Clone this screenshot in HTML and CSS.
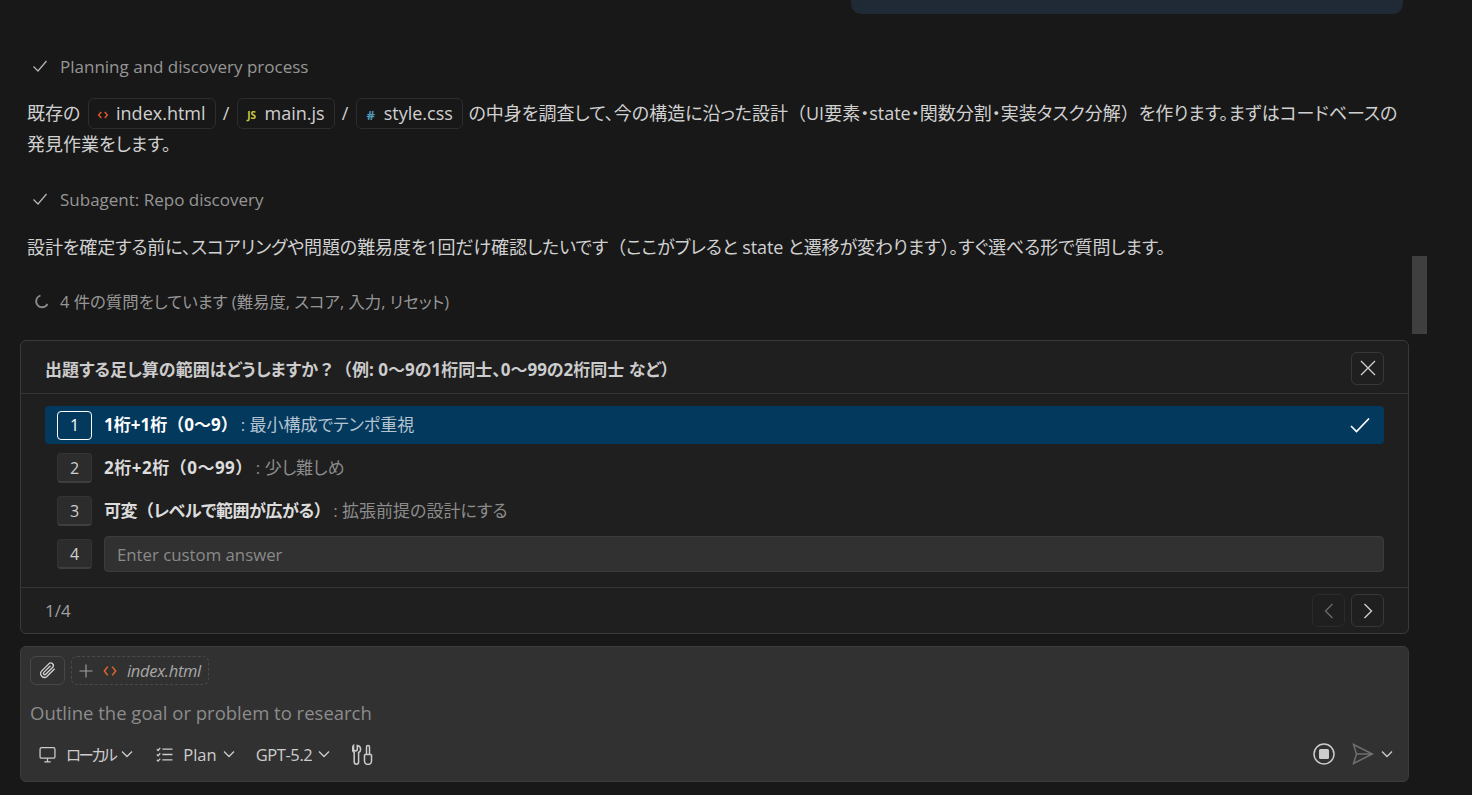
FILE: index.html
```html
<!DOCTYPE html>
<html lang="ja">
<head>
<meta charset="utf-8">
<title>Chat</title>
<link rel="stylesheet" href="styles.css">
</head>
<body>
<div class="scrollbar"></div>
<main class="chat">
  <div class="user-bubble"></div>

  <div class="progress progress-first">
    <svg class="pi" viewBox="0 0 16 16"><path d="M1.500 8.500l4.500 4.500 8.500-10"/></svg>
    <span>Planning and discovery process</span>
  </div>
  <p class="msg msg-first">既存の <span class="chip chip-first"><svg class="ci" viewBox="0 0 16 16"><path class="or" d="M6 4.500L3 8l3 3.500M10 4.500L13 8l-3 3.500"/></svg>index.html</span> <span class="sl">/</span> <span class="chip"><span class="js">JS</span>main.js</span> <span class="sl">/</span> <span class="chip"><span class="hash">#</span>style.css</span> の中身を調査して、今の構造に沿った設計<span class="fw">（</span>UI要素・state・関数分割・実装タスク分解<span class="fw">）</span>を作ります。まずはコードベースの発見作業をします。</p>

  <div class="progress progress-second">
    <svg class="pi" viewBox="0 0 16 16"><path d="M1.500 8.500l4.500 4.500 8.500-10"/></svg>
    <span>Subagent: Repo discovery</span>
  </div>
  <p class="msg msg-second">設計を確定する前に、スコアリングや問題の難易度を1回だけ確認したいです<span class="fw">（</span>ここがブレると state と遷移が変わります<span class="fw">）</span>。すぐ選べる形で質問します。</p>

  <div class="progress progress-third">
    <svg class="pi spin" viewBox="0 0 16 16"><path d="M6.500 2.500A6 6 0 1 0 13.500 11"/></svg>
    <span>4 件の質問をしています (難易度, スコア, 入力, リセット)</span>
  </div>

  <section class="question">
    <header class="q-head">
      <h2>出題する足し算の範囲はどうしますか<span class="fw">？（</span>例: 0〜9の1桁同士、0〜99の2桁同士 など<span class="fw">）</span></h2>
      <button class="icon-btn"><svg viewBox="0 0 16 16"><path d="M1 1l14 14M15 1L1 15"/></svg></button>
    </header>
    <div class="q-body">
      <div class="opt opt-sel">
        <span class="key key-sel">1</span>
        <span class="opt-t"><b>1桁+1桁<span class="fw">（</span>0〜9<span class="fw">）</span></b><i>: 最小構成でテンポ重視</i></span>
        <svg class="opt-check" viewBox="0 0 20 16"><path d="M1 9l5.500 5.500L19 1.500"/></svg>
      </div>
      <div class="opt opt-two">
        <span class="key">2</span>
        <span class="opt-t"><b>2桁+2桁<span class="fw">（</span>0〜99<span class="fw">）</span></b><i>: 少し難しめ</i></span>
      </div>
      <div class="opt opt-three">
        <span class="key">3</span>
        <span class="opt-t"><b>可変<span class="fw">（</span>レベルで範囲が広がる<span class="fw">）</span></b><i>: 拡張前提の設計にする</i></span>
      </div>
      <div class="opt opt-input">
        <span class="key">4</span>
        <div class="custom">Enter custom answer</div>
      </div>
    </div>
    <footer class="q-foot">
      <span class="pager">1/4</span>
      <div class="nav">
        <button class="icon-btn nav-off"><svg viewBox="0 0 16 16"><path d="M11.500 1L4.500 8l7 7"/></svg></button>
        <button class="icon-btn"><svg viewBox="0 0 16 16"><path d="M4.500 1l7 7-7 7"/></svg></button>
      </div>
    </footer>
  </section>

  <section class="composer">
    <div class="ctx">
      <button class="attach"><svg viewBox="0 0 16 16"><path d="M14 6.500L7.500 13a3.200 3.200 0 0 1-4.500-4.500L9.300 2.200a2.200 2.200 0 0 1 3.100 3.100L6.500 11.200a1.100 1.100 0 0 1-1.600-1.600L10.500 4"/></svg></button>
      <div class="ctx-file">
        <svg class="plus" viewBox="0 0 16 16"><path d="M8 .5v15M.5 8h15"/></svg>
        <svg class="code" viewBox="0 0 16 16"><path d="M5.500 3L1.500 8l4 5M10.500 3l4 5-4 5"/></svg>
        <em>index.html</em>
      </div>
    </div>
    <div class="prompt">Outline the goal or problem to research</div>
    <div class="tools">
      <span class="tool tool-local">
        <svg class="ti" viewBox="0 0 16 16"><rect x="1" y="1.500" width="14" height="10" rx="1.500"/><path d="M5 15h6M8 11.500V15"/></svg>
        <span class="local-label">ローカル</span><svg class="ch" viewBox="0 0 12 8"><path d="M1 1.500l5 5 5-5"/></svg>
      </span>
      <span class="tool tool-plan">
        <svg class="ti" viewBox="0 0 16 16"><path d="M6 3h9.500M6 8h9.500M6 13h9.500M.800 3l1.200 1.200L4 1.800M.800 8l1.200 1.200L4 6.800M.800 13l1.200 1.200L4 11.800"/></svg>
        Plan<svg class="ch" viewBox="0 0 12 8"><path d="M1 1.500l5 5 5-5"/></svg>
      </span>
      <span class="tool tool-model">
        GPT-5.2<svg class="ch" viewBox="0 0 12 8"><path d="M1 1.500l5 5 5-5"/></svg>
      </span>
      <svg class="wrench" viewBox="0 0 21 21"><path d="M1.500 1.500v3.500a1.900 1.900 0 0 0 3.800 0V1.500C7.500 2 8.600 3.500 8.600 5.200c0 1.600-.9 2.800-2 3.300v9.500a2.200 2.200 0 0 1-4.400 0V8.500C1 8 .5 6.700.5 5.200.5 3.800.6 2.400 1.500 1.500zM12.500 10.500h7M14.500 10.500V3a1.500 1.500 0 0 1 3 0v7.500M12.500 10.500V17a3.500 3.500 0 0 0 7 0v-6.500"/></svg>
      <span class="spacer"></span>
      <svg class="stop" viewBox="0 0 22 22"><circle cx="11" cy="11" r="10"/><rect x="6" y="6" width="10" height="10" rx="1.500"/></svg>
      <svg class="send" viewBox="0 0 22 22"><path d="M1.500 1.500L20.500 11 1.500 20.500 4.500 11zM4.500 11h16"/></svg>
      <svg class="ch send-ch" viewBox="0 0 12 8"><path d="M1 1.500l5 5 5-5"/></svg>
    </div>
  </section>
</main>
</body>
</html>
```
FILE: styles.css
```css
* { box-sizing: border-box; }
html, body { margin: 0; height: 100%; overflow: hidden; }
body {
  background: #181818;
  color: #cccccc;
  font-family: "Open Sans", "Noto Sans CJK JP", sans-serif;
  font-feature-settings: "palt";
  font-size: 17px;
  position: relative;
}
svg { display: block; fill: none; stroke: currentColor; flex: none; }
.fw { font-feature-settings: normal; }
.scrollbar {
  position: absolute;
  left: 1412px;
  top: 256px;
  width: 15px;
  height: 78px;
  background: #3f3f3f;
}
.chat {
  width: 1389px;
  margin-left: 20px;
  display: flex;
  flex-direction: column;
}
.user-bubble {
  align-self: flex-end;
  width: 552px;
  height: 14px;
  margin-right: 6px;
  background: #1f2a36;
  border-radius: 0 0 10px 10px;
}
.progress {
  display: flex;
  align-items: center;
  gap: 12px;
  height: 24px;
  padding-left: 12px;
  color: #969696;
  font-size: 17px;
}
.pi { width: 16px; height: 16px; stroke: #b4b4b4; stroke-width: 1.300; }
.spin { stroke: #8a8a8a; stroke-width: 1.800; margin-left: 2px; margin-right: -2px; }
.progress-first { margin-top: 40px; }
.progress-second { margin-top: 27px; }
.progress-third { margin-top: 26px; font-size: 16.400px; }
.msg {
  margin: 0;
  padding-left: 7px;
  line-height: 31px;
  color: #d0d0d0;
  font-size: 18px;
}
.msg-first { margin-top: 20px; }
.msg-second { margin-top: 21px; letter-spacing: -0.100px; }
.chip {
  display: inline-block;
  height: 31px;
  padding: 0 9px 0 7px;
  border: 1px solid #2d2d2d;
  border-radius: 6px;
  line-height: 29px;
  margin: 0 1px;
  vertical-align: top;
}
.chip-first { margin-left: 3px; }
.ci, .js, .hash { display: inline-block; vertical-align: middle; margin-right: 6px; }
.ci { width: 14px; height: 14px; stroke-width: 1.600; }
.or { stroke: #e2572b; }
.js { width: 14px; color: #cbcb41; font-size: 10px; font-weight: 700; text-align: center; }
.hash { width: 14px; color: #519aba; font-size: 13px; font-weight: 700; text-align: center; }
.sl { margin: 0 1.500px; }
.question {
  margin-top: 27px;
  height: 294px;
  background: #1f1f1f;
  border: 1px solid #3a3a3a;
  border-radius: 6px;
  display: flex;
  flex-direction: column;
}
.q-head {
  height: 53px;
  flex: none;
  display: flex;
  align-items: center;
  justify-content: space-between;
  padding: 2px 24px 0 24px;
  border-bottom: 1px solid #353535;
}
.q-head h2 { margin: 0; font-size: 17px; font-weight: 700; color: #cccccc; }
.icon-btn {
  width: 33px;
  height: 33px;
  padding: 0;
  background: transparent;
  border: 1px solid #383838;
  border-radius: 6px;
  color: #cccccc;
  display: flex;
  align-items: center;
  justify-content: center;
}
.icon-btn svg { width: 16px; height: 16px; stroke-width: 1.400; }
.q-body { flex: 1; padding: 12px 24px 0; display: flex; flex-direction: column; }
.opt {
  height: 38px;
  margin-bottom: 5px;
  padding: 0 12px;
  display: flex;
  align-items: center;
  gap: 12px;
  border-radius: 4px;
  font-size: 17px;
}
.opt-sel { background: #04395e; color: #fff; padding-right: 14px; }
.key {
  width: 35px;
  height: 30px;
  flex: none;
  display: flex;
  align-items: center;
  justify-content: center;
  background: #2c2c2c;
  border: 1px solid #333;
  border-bottom: 2px solid #3f3f3f;
  border-radius: 4px;
  color: #cfcfcf;
  font-size: 16px;
}
.key-sel { background: transparent; border: 1px solid #fff; color: #fff; height: 29px; }
.opt-t { flex: 1; padding-bottom: 3px; }
.opt-t b { color: #dcdcdc; font-weight: 700; }
.opt-t i { font-style: normal; color: #8c8c8c; margin-left: 3px; }
.opt-two b { letter-spacing: 0.500px; }
.opt-three b { letter-spacing: -0.500px; }
.opt-sel .opt-t b { color: #fff; }
.opt-sel .opt-t i { color: #b4c4d0; }
.opt-check { width: 20px; height: 16px; stroke: #fff; stroke-width: 1.700; }
.opt-input { margin: 0; padding-right: 0; }
.custom {
  flex: 1;
  height: 36px;
  padding-left: 12px;
  display: flex;
  align-items: center;
  background: #313131;
  border: 1px solid #3c3c3c;
  border-radius: 4px;
  color: #8a8a8a;
  font-size: 16.800px;
}
.q-foot {
  height: 46px;
  flex: none;
  display: flex;
  align-items: center;
  justify-content: space-between;
  padding: 0 24px;
  border-top: 1px solid #353535;
}
.pager { color: #a0a0a0; font-size: 17px; }
.nav { display: flex; gap: 6px; }
.nav-off { color: #6a6a6a; border-color: #2b2b2b; }
.composer {
  margin-top: 12px;
  height: 136px;
  background: #313131;
  border: 1px solid #3c3c3c;
  border-radius: 6px;
  padding: 9px 9px 0;
  display: flex;
  flex-direction: column;
}
.ctx { display: flex; gap: 6px; height: 29px; }
.attach {
  width: 35px;
  height: 29px;
  padding: 0;
  display: flex;
  align-items: center;
  justify-content: center;
  background: transparent;
  border: 1px solid #484848;
  border-radius: 6px;
  color: #d4d4d4;
}
.attach svg { width: 19px; height: 19px; stroke-width: 1.100; }
.ctx-file {
  display: flex;
  align-items: center;
  width: 138px;
  padding-left: 7px;
  border: 1px dashed #4a4a4a;
  border-radius: 6px;
}
.plus { width: 14px; height: 14px; stroke: #a0a0a0; stroke-width: 1.300; }
.code { width: 14px; height: 14px; margin-left: 10px; stroke: #e2672b; stroke-width: 1.700; }
.ctx-file em { margin-left: 10px; font-size: 16.500px; color: #a8a8a8; letter-spacing: -0.300px; }
.prompt { margin-top: 15px; height: 26px; line-height: 26px; font-size: 18.500px; color: #8c8c8c; }
.tools {
  margin-top: 12px;
  height: 32px;
  padding-left: 9px;
  display: flex;
  align-items: center;
  color: #cccccc;
  font-size: 16.500px;
}
.tool { display: flex; align-items: center; }
.local-label { font-size: 15.500px; letter-spacing: -2.500px; }
.tool-local { margin-right: 23px; }
.tool-plan { margin-right: 21px; }
.tool-model { margin-right: 22px; letter-spacing: -0.400px; }
.ti { width: 17px; height: 17px; margin-right: 10px; stroke-width: 1.200; }
.ch { width: 12px; height: 8px; margin-left: 6px; stroke-width: 1.300; }
.wrench { width: 21px; height: 21px; stroke-width: 1.500; }
.spacer { flex: 1; }
.stop { width: 22px; height: 22px; stroke-width: 1.500; }
.stop rect { fill: currentColor; stroke: none; }
.send { width: 22px; height: 22px; margin-left: 17px; color: #6f6f6f; stroke-width: 1.500; }
.send-ch { margin: 0 6px 0 7px; }
```
